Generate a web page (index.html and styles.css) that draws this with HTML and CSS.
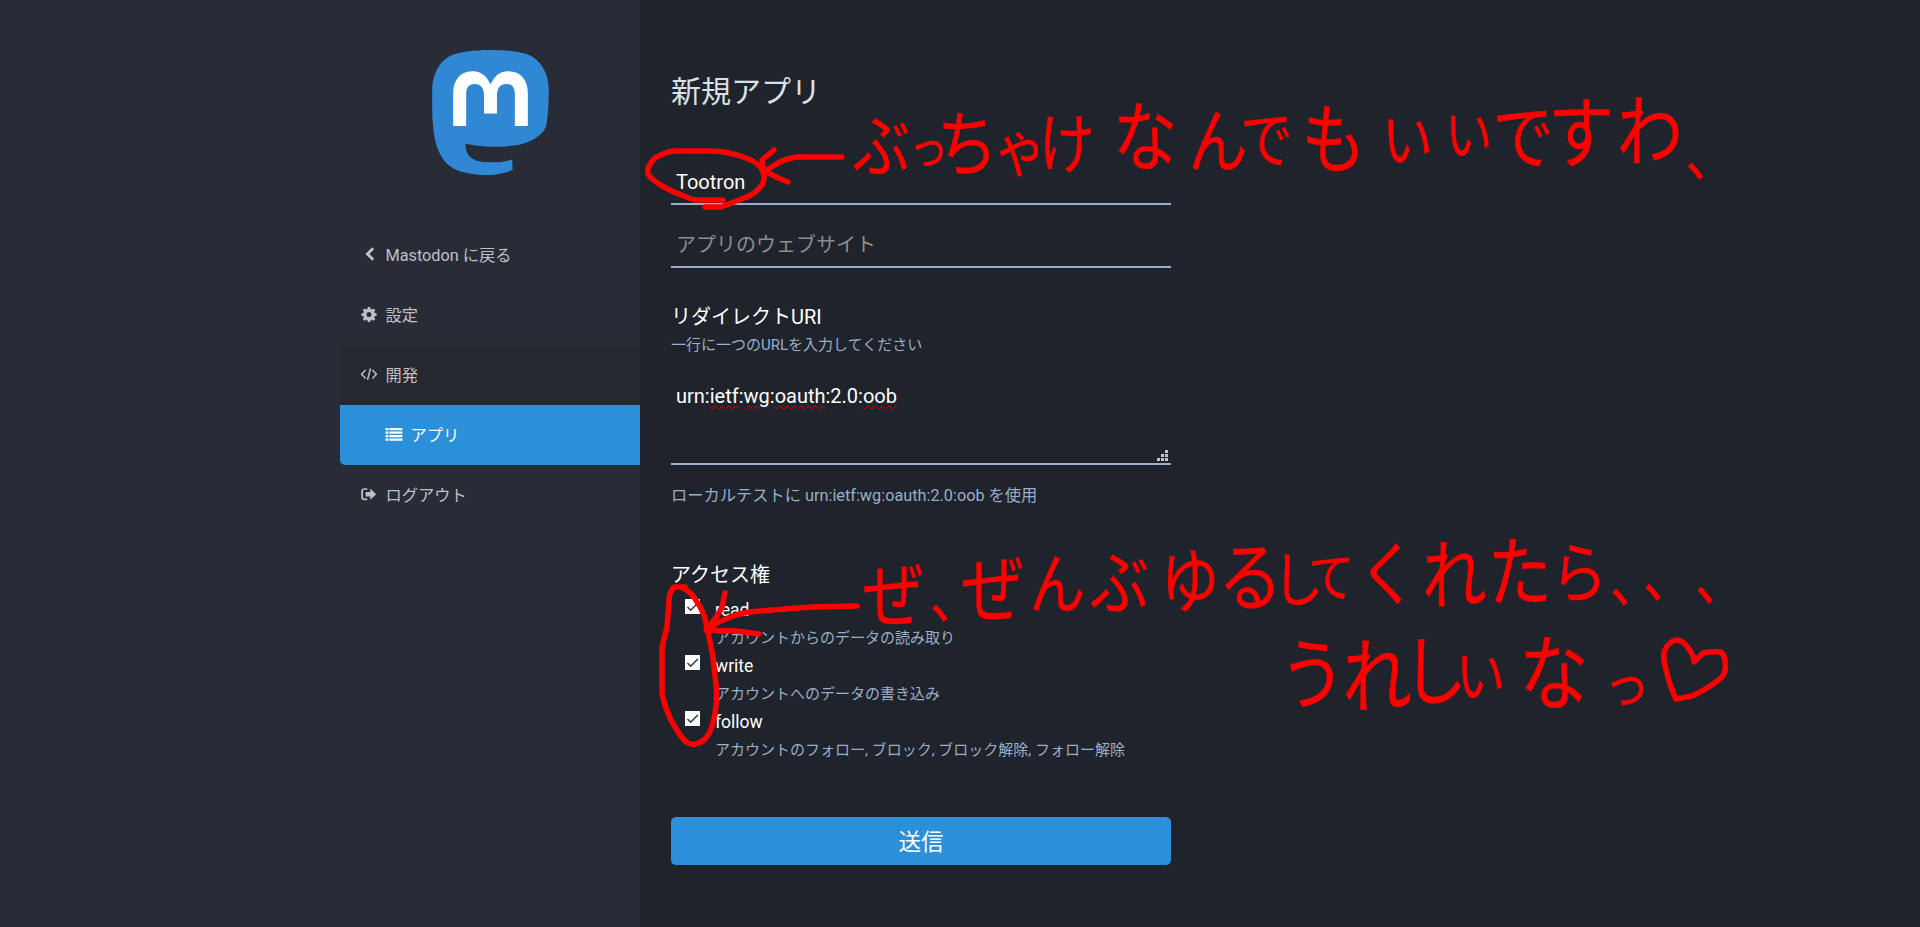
FILE: index.html
```html
<!DOCTYPE html>
<html lang="ja">
<head>
<meta charset="utf-8">
<title>新規アプリ - Mastodon</title>
<link rel="stylesheet" href="styles.css">
</head>
<body>
<div class="admin">
  <aside class="sidebar">
    <div class="sidebar-inner">
      <svg class="logo" viewBox="0 0 216.4144 232.00976" width="117" height="125">
        <path fill="#3088d4" d="M211.80734 139.0875c-3.18125 16.36625-28.4925 34.2775-57.5625 37.74875-15.15875 1.80875-30.08375 3.47125-45.99875 2.74125-26.0275-1.1925-46.565-6.2125-46.565-6.2125 0 2.53375.15625 4.94625.46875 7.2025 3.38375 25.68625 25.47 27.225 46.39125 27.9425 21.11625.7225 39.91875-5.20625 39.91875-5.20625l.8675 19.09s-14.77 7.93125-41.08125 9.39c-14.50875.7975-32.52375-.365-53.50625-5.91875C9.23234 213.82 1.40609 165.31125.20859 116.09125c-.365-14.61375-.14-28.39375-.14-39.91875 0-50.33 32.97625-65.0825 32.97625-65.0825C49.67234 3.45375 78.20359.2425 107.86484 0h.72875c29.66125.2425 58.21125 3.45375 74.8375 11.09 0 0 32.975 14.7525 32.975 65.0825 0 0 .41375 37.13375-4.59875 62.915"/>
        <path fill="#fff" d="M177.50984 80.077v60.94125h-24.14375v-59.15c0-12.46875-5.24625-18.7975-15.74-18.7975-11.6025 0-17.4175 7.5075-17.4175 22.3525v32.37625H96.20734V85.42325c0-14.845-5.81625-22.3525-17.41875-22.3525-10.49375 0-15.74 6.32875-15.74 18.7975v59.15H38.90484V80.077c0-12.455 3.17125-22.3525 9.54125-29.675 6.56875-7.3225 15.17125-11.07625 25.85-11.07625 12.355 0 21.71125 4.74875 27.8975 14.2475l6.01375 10.08125 6.015-10.08125c6.185-9.49875 15.54125-14.2475 27.8975-14.2475 10.6775 0 19.28 3.75375 25.85 11.07625 6.36875 7.3225 9.54 17.22 9.54 29.675"/>
      </svg>
      <nav class="menu">
        <a class="item"><svg class="icon" viewBox="0 0 18 16"><path d="M12.2 1.2l2 2L9.5 8l4.7 4.8-2 2L5.4 8z"/></svg>Mastodon に戻る</a>
        <a class="item"><svg class="icon" viewBox="0 0 18 16"><path fill-rule="evenodd" d="M7.8 1h2.4l.4 2 1.3.5 1.7-1.1 1.7 1.7-1.1 1.7.5 1.2 2 .4v2.4l-2 .4-.5 1.3 1.1 1.6-1.7 1.7-1.7-1.1-1.3.5-.4 2H7.8l-.4-2-1.2-.5-1.7 1.1-1.7-1.7 1.1-1.6-.5-1.3-2-.4V7.4l2-.4.5-1.2-1.1-1.7 1.7-1.7 1.7 1.1L7.400 3zM9 6.1a2.500 2.500 0 1 0 0 5 2.500 2.500 0 0 0 0-5z"/></svg>設定</a>
        <a class="item open"><svg class="icon line" viewBox="0 0 18 16"><path d="M5.600 4L1.600 8.200l4 4.200M12.400 4l4 4.200-4 4.200M10.500 2.500l-3 11.400"/></svg>開発</a>
        <a class="item selected"><svg class="icon" viewBox="0 0 18 16"><path d="M.5 2h3v2.300h-3zM4.400 2h13v2.300h-13zM.5 5.500h3v2.300h-3zM4.400 5.500h13v2.300h-13zM.5 9h3v2.300h-3zM4.400 9h13v2.300h-13zM.5 12.500h3v2.300h-3zM4.400 12.500h13v2.300h-13z"/></svg>アプリ</a>
        <a class="item"><svg class="icon" viewBox="0 0 18 16"><path d="M7.300 2.200v1.600H4.400Q3 3.800 3 5.200v6q0 1.400 1.400 1.400h2.900v1.600H4.200Q1.200 14.200 1.200 11.200v-6q0-3 3-3zM10.300 2.600l5.900 5.600-5.900 5.600v-3.300H5.600V5.900h4.700z"/></svg>ログアウト</a>
      </nav>
    </div>
  </aside>
  <main class="content">
    <h2 class="title">新規アプリ</h2>
    <form class="form">
      <input class="field" type="text" value="Tootron" spellcheck="false">
      <input class="field second" type="text" placeholder="アプリのウェブサイト">
      <label class="label redirect">リダイレクトURI</label>
      <p class="hint">一行に一つのURLを入力してください</p>
      <div class="textarea">
        <span>urn:<u>ietf</u>:<u>wg</u>:<u>oauth</u>:2.0:<u>oob</u></span>
        <svg class="grip" width="11" height="11" shape-rendering="crispEdges"><path d="M8 0h3v3H8zM4 4h3v3H4zM8 4h3v3H8zM0 8h3v3H0zM4 8h3v3H4zM8 8h3v3H8z"/></svg>
      </div>
      <p class="hint wide">ローカルテストに urn:ietf:wg:oauth:2.0:oob を使用</p>
      <label class="label scopes-label">アクセス権</label>
      <ul class="scopes">
        <li class="scope"><svg class="check" viewBox="0 0 15 15"><path d="M2.500 8l3.200 3.200L12.800 4"/></svg><div><div class="name">read</div><div class="desc">アカウントからのデータの読み取り</div></div></li>
        <li class="scope"><svg class="check" viewBox="0 0 15 15"><path d="M2.500 8l3.200 3.200L12.800 4"/></svg><div><div class="name">write</div><div class="desc">アカウントへのデータの書き込み</div></div></li>
        <li class="scope"><svg class="check" viewBox="0 0 15 15"><path d="M2.500 8l3.200 3.200L12.800 4"/></svg><div><div class="name">follow</div><div class="desc">アカウントのフォロー, ブロック, ブロック解除, フォロー解除</div></div></li>
      </ul>
      <button class="submit" type="button">送信</button>
    </form>
  </main>
</div>
<svg class="ink" viewBox="0 0 1920 927" width="1920" height="927">
  <g class="stroke">
    <path d="M723 200H695Q688 198 674 192Q660 186 650 177Q646 172 648.600 167Q652 158 661 155Q668 151 677 151H712Q731 152 743 157Q755 161 760.500 167Q766 175 763 183Q759 191 747 197L721 207H705"/>
    <path d="M842 157H797Q785 159 778 163L765 171L776 177L788 182M774 150L762 160L764 171"/>
    <path d="M685 587H674Q669 593 669 600L667 627L662 647V693Q665 708 671 720Q679 735 686 742Q691 745 695 744Q701 743 705 739Q711 732 713 723Q717 708 716.500 690L713 657L707 627Q704 611 697 602Q692 592 681 587"/>
    <path d="M857 606L812 607L760 611Q743 612 730 617Q719 621 709 628M706 630L736 631L759 634M725 593L722 607Q718 616 709 626"/>
    <path d="M1676 699Q1669 684 1667 673Q1663 660 1664 652Q1668 641 1677 640Q1684 641 1688 648Q1694 655 1694 662L1703 653Q1712 651 1721 652Q1725 656 1725 662Q1727 670 1722 677Q1711 687 1692 696L1676 699"/>
  </g>
  <text class="hand" transform="scale(.85 1)"><tspan x="1037" y="171" font-size="68">ぶ</tspan><tspan x="1092" y="164" font-size="46">っ</tspan><tspan x="1138" y="170" font-size="72">ち</tspan><tspan x="1200" y="172" font-size="62">ゃ</tspan><tspan x="1255" y="168" font-size="66">け</tspan><tspan x="1347" y="165" font-size="76">な</tspan><tspan x="1433" y="167" font-size="70">ん</tspan><tspan x="1490" y="163" font-size="62">で</tspan><tspan x="1569" y="167" font-size="76">も</tspan><tspan x="1656" y="162" font-size="60">い</tspan><tspan x="1728" y="155" font-size="56">い</tspan><tspan x="1792" y="163" font-size="72">で</tspan><tspan x="1860" y="162" font-size="78">す</tspan><tspan x="1941" y="160" font-size="78">わ</tspan><tspan x="2013" y="176" font-size="60">、</tspan></text>
  <text class="hand" transform="scale(.85 1)"><tspan x="1051" y="621" font-size="72">ぜ</tspan><tspan x="1124" y="618" font-size="60">、</tspan><tspan x="1168" y="616" font-size="74">ぜ</tspan><tspan x="1244" y="608" font-size="66">ん</tspan><tspan x="1317" y="609" font-size="70">ぶ</tspan><tspan x="1400" y="607" font-size="70">ゆ</tspan><tspan x="1471" y="605" font-size="76">る</tspan><tspan x="1527" y="602" font-size="60">し</tspan><tspan x="1566" y="597" font-size="54">て</tspan><tspan x="1633" y="600" font-size="70">く</tspan><tspan x="1711" y="603" font-size="76">れ</tspan><tspan x="1788" y="600" font-size="76">た</tspan><tspan x="1858" y="597" font-size="66">ら</tspan><tspan x="1924" y="602" font-size="60">、</tspan><tspan x="1963" y="597" font-size="60">、</tspan><tspan x="2024" y="600" font-size="60">、</tspan></text>
  <text class="hand" transform="scale(.85 1)"><tspan x="1544" y="703" font-size="78">う</tspan><tspan x="1620" y="706" font-size="82">れ</tspan><tspan x="1688" y="699" font-size="76">し</tspan><tspan x="1742" y="697" font-size="58">い</tspan><tspan x="1828" y="703" font-size="82">な</tspan><tspan x="1914" y="704" font-size="54">っ</tspan></text>
</svg>
</body>
</html>
```
FILE: styles.css
```css
* { box-sizing: border-box; }
body {
  margin: 0;
  background: #1f232b;
  color: #fff;
  font-family: Roboto, "Noto Sans CJK JP", sans-serif;
  overflow: hidden;
}
.admin { display: flex; height: 927px; }
.sidebar {
  flex: 0 0 640px;
  display: flex;
  justify-content: flex-end;
  background: #282c37;
}
.sidebar-inner { width: 300px; }
.logo { display: block; margin: 50px auto; }
.menu { display: flex; flex-direction: column; }
.item {
  height: 60px;
  padding: 0 0 2px 20px;
  display: flex;
  align-items: center;
  color: #c0c0c4;
  font-size: 16.25px;
}
.icon { width: 18px; height: 16px; margin-right: 7.5px; fill: currentColor; }
.icon.line { fill: none; stroke: currentColor; stroke-width: 1.5; }
.open { background: #252731; border-radius: 5px 0 0 0; }
.selected {
  padding-left: 45px;
  background: #2b90d9;
  border-radius: 0 0 0 5px;
  color: #fff;
}
.content { padding: 70px 0 0 31px; }
.title {
  margin: 0;
  font-size: 30px;
  line-height: 44px;
  font-weight: 400;
  color: #d9e1e8;
}
.form { width: 500px; padding-top: 46px; display: flex; flex-direction: column; }
.field {
  width: 100%;
  height: 45px;
  padding: 0 5px;
  border: 0;
  border-bottom: 2px solid #9baec8;
  border-radius: 0;
  background: transparent;
  color: #fff;
  font-family: inherit;
  font-size: 20px;
  outline: 0;
}
.field::placeholder { color: #8b8d91; opacity: 1; }
.second { margin-top: 18px; }
.label { font-size: 20px; line-height: 26px; }
.redirect { margin-top: 36px; }
.hint { margin: 3px 0 0; font-size: 15px; line-height: 24px; color: #9baec8; }
.textarea {
  height: 87px;
  margin-top: 21px;
  padding: 6px 3px 2px 5px;
  display: flex;
  justify-content: space-between;
  border-bottom: 2px solid #9baec8;
  font-size: 20px;
  line-height: 24px;
}
.textarea u { text-decoration: underline wavy #e00000 1px; text-underline-offset: 2px; }
.grip { align-self: flex-end; fill: #c8c4be; }
.wide { margin-top: 19px; font-size: 16.25px; }
.scopes-label { margin-top: 54px; }
.scopes { margin: 8px 0 0; padding: 0; list-style: none; }
.scope { display: flex; height: 56px; padding-left: 14px; gap: 15px; }
.check {
  width: 15px;
  height: 15px;
  margin-top: 3px;
  background: #fff;
  fill: none;
  stroke: #333;
  stroke-width: 1.4;
}
.name { font-size: 17.5px; line-height: 28px; }
.desc { font-size: 15px; line-height: 28px; color: #9baec8; white-space: nowrap; }
.submit {
  height: 48px;
  margin-top: 53px;
  padding: 0 0 3px;
  border: 0;
  border-radius: 5px;
  background: #2b90d9;
  color: #fff;
  font-family: inherit;
  font-size: 22.5px;
}
.ink { position: absolute; left: 0; top: 0; pointer-events: none; }
.stroke {
  fill: none;
  stroke: #f00;
  stroke-width: 5.5;
  stroke-linecap: round;
  stroke-linejoin: round;
}
.hand {
  font-family: "Noto Sans CJK JP", sans-serif;
  text-anchor: middle;
  fill: #f00;
  stroke: #f00;
  stroke-width: .4;
}
```
